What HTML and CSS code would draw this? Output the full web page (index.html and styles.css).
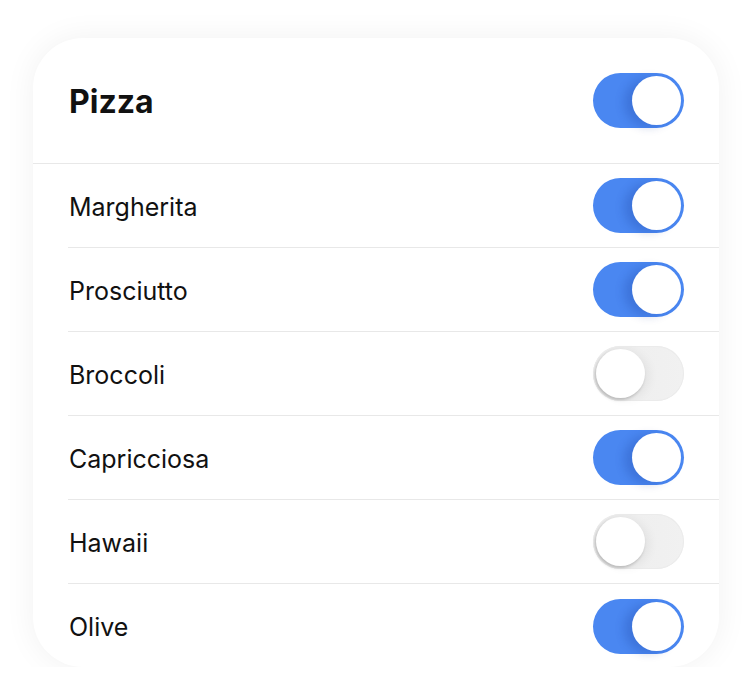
FILE: index.html
```html
<!DOCTYPE html>
<html lang="en">
<head>
<meta charset="utf-8">
<title>Pizza</title>
<link rel="stylesheet" href="styles.css">
</head>
<body>
<div class="card">
  <div class="header">
    <span class="title">Pizza</span>
    <span class="toggle on"><span class="knob"></span></span>
  </div>
  <ul class="list">
    <li class="row"><span class="label">Margherita</span><span class="toggle on"><span class="knob"></span></span></li>
    <li class="row"><span class="label">Prosciutto</span><span class="toggle on"><span class="knob"></span></span></li>
    <li class="row"><span class="label">Broccoli</span><span class="toggle off"><span class="knob"></span></span></li>
    <li class="row"><span class="label">Capricciosa</span><span class="toggle on"><span class="knob"></span></span></li>
    <li class="row"><span class="label">Hawaii</span><span class="toggle off"><span class="knob"></span></span></li>
    <li class="row"><span class="label">Olive</span><span class="toggle on"><span class="knob"></span></span></li>
  </ul>
</div>
</body>
</html>
```
FILE: styles.css
```css
* { box-sizing: border-box; }
html, body { margin: 0; padding: 0; background: #ffffff; }
body {
  font-family: Inter, "Noto Sans", sans-serif;
  color: #111111;
  padding: 38px 0 0 33px;
}
.card {
  width: 686px;
  height: 629px;
  background: #ffffff;
  border-radius: 50px;
  box-shadow: 0 0 32px rgba(0, 0, 0, 0.06);
  overflow: hidden;
}
.header {
  height: 126px;
  display: flex;
  align-items: center;
  justify-content: space-between;
  padding: 0 35px 0 36px;
  border-bottom: 1px solid #e8e8e8;
}
.title {
  font-size: 32px;
  font-weight: 700;
  line-height: 1;
  padding-top: 2px;
}
.list {
  list-style: none;
  margin: 0;
  padding: 0 0 0 35px;
}
.row {
  height: 84px;
  display: flex;
  align-items: center;
  justify-content: space-between;
  padding: 0 35px 0 1px;
  border-bottom: 1px solid #e8e8e8;
}
.row:last-child { border-bottom: none; }
.label {
  font-size: 25px;
  font-weight: 400;
  line-height: 1;
  padding-top: 3px;
}
.toggle {
  position: relative;
  display: block;
  width: 91px;
  height: 55px;
  border-radius: 28px;
}
.toggle.on { background: #4a87f1; }
.toggle.off {
  background: linear-gradient(90deg, #e4e4e4 0%, #efefef 50%, #f1f1f1 100%);
  box-shadow: inset 0 0 0 1px #ebebeb;
}
.knob {
  position: absolute;
  top: 3px;
  width: 49px;
  height: 49px;
  border-radius: 50%;
  background: #ffffff;
}
.toggle.on .knob {
  right: 3px;
  box-shadow: -8px 2px 10px rgba(20, 50, 140, 0.22);
}
.toggle.off .knob {
  left: 3px;
  box-shadow: -1px 2px 3px rgba(0, 0, 0, 0.18), 5px 2px 10px rgba(0, 0, 0, 0.05);
}
```
